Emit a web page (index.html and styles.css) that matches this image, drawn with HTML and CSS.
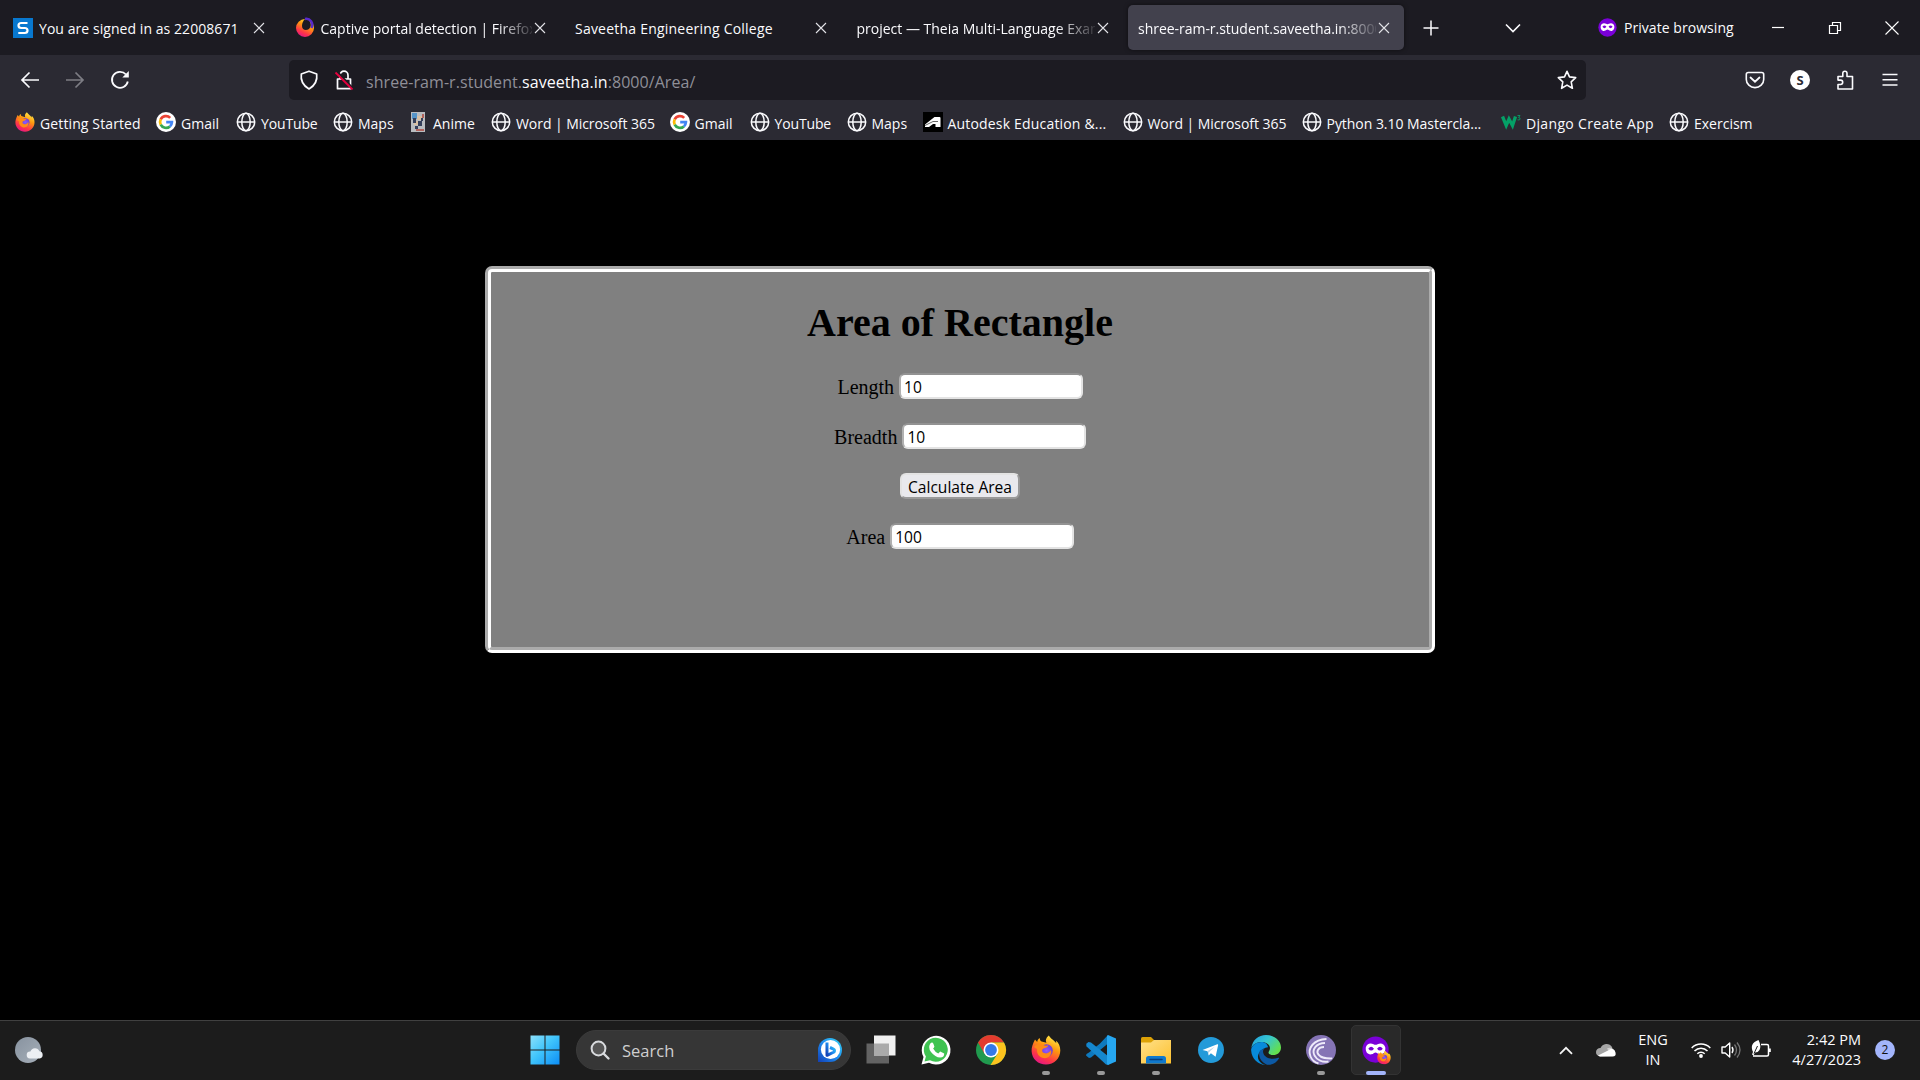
FILE: index.html
```html
<!DOCTYPE html>
<html lang="en">
<head>
<meta charset="utf-8">
<title>Area of Rectangle</title>
<link rel="stylesheet" href="styles.css">
</head>
<body>
<svg class="defs" width="0" height="0" aria-hidden="true">
  <defs>
    <linearGradient id="fire" x1="0.8" y1="0" x2="0.3" y2="1"><stop offset="0" stop-color="#fff44f"/><stop offset="0.4" stop-color="#ff980e"/><stop offset="0.75" stop-color="#ff3647"/><stop offset="1" stop-color="#e31587"/></linearGradient>
    <radialGradient id="violet"><stop offset="0" stop-color="#9059ff"/><stop offset="1" stop-color="#6e3fd4"/></radialGradient>
    <linearGradient id="win" x1="0" y1="0" x2="1" y2="1"><stop offset="0" stop-color="#8ce0fb"/><stop offset="0.45" stop-color="#41c5fb"/><stop offset="1" stop-color="#0c8df5"/></linearGradient>
    <linearGradient id="bing" x1="1" y1="0" x2="0" y2="1"><stop offset="0" stop-color="#35d4f5"/><stop offset="0.5" stop-color="#1f8df0"/><stop offset="1" stop-color="#123fb4"/></linearGradient>
    <linearGradient id="folder" x1="0" y1="0" x2="1" y2="1"><stop offset="0" stop-color="#ffe08a"/><stop offset="1" stop-color="#fdc12f"/></linearGradient>
    <linearGradient id="edgeTop" x1="0" y1="0" x2="1" y2="0.6"><stop offset="0" stop-color="#1e9de4"/><stop offset="0.5" stop-color="#36c6d0"/><stop offset="1" stop-color="#63df4e"/></linearGradient>
    <linearGradient id="moon" x1="0" y1="0" x2="1" y2="1"><stop offset="0" stop-color="#87929f"/><stop offset="1" stop-color="#a6afb9"/></linearGradient>
    <symbol id="globe" viewBox="0 0 20 20"><g fill="none" stroke="#fbfbfe" stroke-width="1.5"><circle cx="10" cy="10" r="8.7"/><ellipse cx="10" cy="10" rx="4.2" ry="8.7"/><path d="M1.3 10h17.4"/></g></symbol>
    <symbol id="google" viewBox="0 0 20 20"><circle cx="10" cy="10" r="10" fill="#fff"/><g fill="none" stroke-width="2.7"><path d="M4.7 7.4A5.9 5.9 0 0 1 14.2 5.9" stroke="#ea4335"/><path d="M4.7 7.4a5.9 5.9 0 0 0 0 5.2" stroke="#fbbc05"/><path d="M4.7 12.6a5.9 5.9 0 0 0 9.2 1.8" stroke="#34a853"/><path d="M13.9 14.4A5.9 5.9 0 0 0 15.9 10.2H10.2" stroke="#4285f4"/></g></symbol>
    <symbol id="firefox" viewBox="0 0 30 30"><path d="M17.8 0.4c-3 2.5-3.6 5-2.4 7.3l-4.8-1.2C9.2 5.800 8.800 4.600 8.700 3 7.300 3.900 6.300 5.200 6.200 7L4 4.400C1.900 8.700 0.400 12 0.600 16.300 1 24.200 7.200 29.600 15 29.600c8 0 14.300-6.200 14.300-14.100 0-4.400-1.600-7.600-4.300-9.700l.3 2.500C22.600 4.500 19.600 3.600 17.800.4Z" fill="url(#fire)"/><circle cx="15.500" cy="15.500" r="6.300" fill="url(#violet)"/><path d="M3 12c3-3.500 6-4 9-2.300 2 1.200 3.900 1 5.300.8-1 2-2.600 2.500-4.600 2.900-2 .6-2.200 3.700.6 4.700 3.200 1.200 5.500-1.100 6.500-3 2 4.500-2.600 9-7.500 8C7.500 22 5.500 18 6.100 14Z" fill="#ff8a16"/></symbol>
    <symbol id="close" viewBox="0 0 12 12"><path d="M1 1l10 10M11 1L1 11" fill="none" stroke="#e3e3e8" stroke-width="1.1"/></symbol>
    <symbol id="mask" viewBox="0 0 30 30"><circle cx="15" cy="15" r="14.500" fill="#7a00d8"/><path fill-rule="evenodd" d="M4.300 12.500c1-4 5-5.200 8.500-3.300q2.200 1.200 4.400 0c3.500-1.900 7.500-.7 8.500 3.300.8 5-2.200 8.500-6.200 7.800-2-.4-3.200-2-4.500-2s-2.500 1.600-4.500 2c-4 .7-7-2.800-6.200-7.800ZM7 14q3.200 4.300 6.300 0-3.100-4.300-6.300 0Zm9.700 0q3.100 4.300 6.300 0-3.200-4.300-6.300 0Z" fill="#fff"/></symbol>
  </defs>
</svg>

<header class="browser">
  <div class="tabstrip">
    <div class="tab first"><svg class="favicon" viewBox="0 0 20 20"><path fill="#0878cf" d="M0 0h20v20H0z"/><path d="M14.500 5H8.300Q5.500 5 5.500 7.500T8.300 10h3.400q2.800 0 2.800 2.500T11.700 15H5.300" fill="none" stroke="#fff" stroke-width="2.200"/></svg><span class="title t1">You are signed in as 22008671</span><svg class="x"><use href="#close"/></svg></div>
    <div class="tab"><svg class="favicon" viewBox="0 0 20 20"><path d="M10 1a9 9 0 1 0 9 9C19 6 16 2 13 1c3 3 4 7 1 10-3 2-7 1-7-3 0-3 1-5 3-7Z" fill="url(#fire)"/><path d="M10 1c5-1 9 4 6.500 9" fill="none" stroke="#592acb" stroke-width="2.500"/></svg><span class="title fade t2">Captive portal detection | Firefox</span><svg class="x"><use href="#close"/></svg></div>
    <div class="tab"><span class="title t3">Saveetha Engineering College</span><svg class="x"><use href="#close"/></svg></div>
    <div class="tab"><span class="title fade t4">project — Theia Multi-Language Example</span><svg class="x"><use href="#close"/></svg></div>
    <div class="tab active"><span class="title fade t5">shree-ram-r.student.saveetha.in:8000/Area</span><svg class="x"><use href="#close"/></svg></div>
    <svg class="newtab" viewBox="0 0 16 16"><path d="M8 .5v15M.5 8h15" stroke="#fbfbfe" stroke-width="1.500"/></svg>
    <svg class="alltabs" viewBox="0 0 16 10"><path d="M1 1.500l7 7 7-7" fill="none" stroke="#fbfbfe" stroke-width="1.600"/></svg>
    <div class="private"><svg width="19" height="19"><use href="#mask"/></svg><span>Private browsing</span></div>
    <div class="wincontrols">
      <svg viewBox="0 0 14 14"><path d="M1 6.500h12" stroke="#fff" stroke-width="1.200"/></svg>
      <svg viewBox="0 0 14 14"><path d="M1.500 4.500h8v8h-8zM4.500 4V1.500h8v8H10" fill="none" stroke="#fff" stroke-width="1.200"/></svg>
      <svg viewBox="0 0 14 14"><path d="M.5.500l13 13M13.500.5l-13 13" stroke="#fff" stroke-width="1.100"/></svg>
    </div>
  </div>

  <div class="navbar">
    <svg class="nav" viewBox="0 0 20 20"><path d="M19 10H2M9.500 2.500L2 10l7.500 7.500" fill="none" stroke="#fbfbfe" stroke-width="1.700"/></svg>
    <svg class="nav dim" viewBox="0 0 20 20"><path d="M1 10h17M10.500 2.500L18 10l-7.500 7.500" fill="none" stroke="#fbfbfe" stroke-width="1.700"/></svg>
    <svg class="nav" viewBox="0 0 20 20"><path d="M17.800 11.500A8 8 0 1 1 16 4.500" fill="none" stroke="#fbfbfe" stroke-width="1.800"/><path d="M18.800 1v6.500h-6.500Z" fill="#fbfbfe"/></svg>
    <div class="urlbar">
      <svg class="shield" viewBox="0 0 20 20"><path d="M10 1.200L17.700 4c.8 6-1.700 11.500-7.700 15C4 15.500 1.500 10 2.300 4Z" fill="none" stroke="#fbfbfe" stroke-width="1.700" stroke-linejoin="round"/></svg>
      <svg class="lock" viewBox="0 0 20 20"><path d="M6 9V5.200a4 4 0 0 1 8 0V9M3.500 9h13v9.700h-13Z" fill="none" stroke="#fbfbfe" stroke-width="1.700" stroke-linejoin="round"/><path d="M3.500 2l15 16" stroke="#1c1b22" stroke-width="2"/><path d="M1.500 2.500l17 17" stroke="#e7003f" stroke-width="1.800"/></svg>
      <span class="url">shree-ram-r.student.<b>saveetha.in</b>:8000/Area/</span>
      <svg class="star" viewBox="0 0 20 20"><path d="M10 1.300l2.500 5.600 6.200.700-4.500 4.200 1.200 6.500-5.400-3.200-5.400 3.200 1.200-6.500L1.300 7.600l6.200-.7Z" fill="none" stroke="#fbfbfe" stroke-width="1.600" stroke-linejoin="round"/></svg>
    </div>
    <div class="tools">
      <svg viewBox="0 0 20 20"><path d="M3.200 2.500h13.600q1.900 0 1.900 1.900v5a8.700 8.200 0 0 1-17.400 0v-5q0-1.900 1.900-1.900Z" fill="none" stroke="#fbfbfe" stroke-width="1.600"/><path d="M5.500 7.500L10 11.700l4.500-4.200" fill="none" stroke="#fbfbfe" stroke-width="1.800" stroke-linecap="round"/></svg>
      <span class="avatar">S</span>
      <svg viewBox="0 0 20 20"><path d="M3 19V14.500H5.500a2.200 2.200 0 0 0 0-4.400H3V6.500h4.800V3.300a2.100 2.100 0 0 1 4.200 0V6.500h5.500V19Z" fill="none" stroke="#fbfbfe" stroke-width="1.600" stroke-linejoin="round"/></svg>
      <svg viewBox="0 0 20 20"><path d="M2.500 4.500h15M2.500 9.700h15M2.500 15h15" stroke="#fbfbfe" stroke-width="1.500"/></svg>
    </div>
  </div>

  <nav class="bookmarks">
    <span class="bm w1"><svg><use href="#firefox"/></svg><span>Getting Started</span></span>
    <span class="bm w2"><svg><use href="#google"/></svg><span>Gmail</span></span>
    <span class="bm w3"><svg><use href="#globe"/></svg><span>YouTube</span></span>
    <span class="bm w4"><svg><use href="#globe"/></svg><span>Maps</span></span>
    <span class="bm w5"><svg viewBox="0 0 20 20"><path fill="#b9bcc0" d="M3 0h14v20H3z"/><path fill="#5594c9" d="M4 1h5v6H4z"/><path fill="#d8c0a5" d="M9 4h5v4H9zM6 9h4v4H6z"/><path fill="#35405b" d="M5 6h3v5H5zM10 9h4v5h-4zM7 14h3v3H7zM13 6h2v3h-2z"/><path fill="#b0635d" d="M8 17h8v2H8zM14 2h2v4h-2z"/></svg><span>Anime</span></span>
    <span class="bm w6"><svg><use href="#globe"/></svg><span>Word | Microsoft 365</span></span>
    <span class="bm w2"><svg><use href="#google"/></svg><span>Gmail</span></span>
    <span class="bm w3"><svg><use href="#globe"/></svg><span>YouTube</span></span>
    <span class="bm w7"><svg><use href="#globe"/></svg><span>Maps</span></span>
    <span class="bm w8"><svg viewBox="0 0 20 20"><path fill="#000" d="M0 0h20v20H0z"/><path fill="#fff" d="M2 15V12.500L11.500 5h5q1 0 1 1v9H12.500v-3H10L6 15Z"/><path d="M2 13.500L10 9.500h5" stroke="#000" stroke-width=".6" fill="none"/></svg><span>Autodesk Education &amp;...</span></span>
    <span class="bm w9"><svg><use href="#globe"/></svg><span>Word | Microsoft 365</span></span>
    <span class="bm w10"><svg><use href="#globe"/></svg><span>Python 3.10 Mastercla...</span></span>
    <span class="bm w11"><svg viewBox="0 0 20 20"><path d="M1.500 4.500l3.700 9L8 7l3.500 6.500L14.500 4.500" fill="none" stroke="#04a067" stroke-width="3.300"/><path d="M16.500 3.500H19l-1.400 2q1.700 0 1.500 1.500t-2.600.8" fill="none" stroke="#04a067" stroke-width=".9"/></svg><span>Django Create App</span></span>
    <span class="bm"><svg><use href="#globe"/></svg><span>Exercism</span></span>
  </nav>
</header>

<main class="page">
  <form class="card">
    <h1>Area of Rectangle</h1>
    <div class="row"><label for="l">Length</label><input id="l" type="text" value="10"></div>
    <div class="row"><label for="b">Breadth</label><input id="b" type="text" value="10"></div>
    <div class="row"><button type="button">Calculate Area</button></div>
    <div class="row"><label for="a">Area</label><input id="a" type="text" value="100"></div>
  </form>
</main>

<footer class="taskbar">
  <svg class="weather" viewBox="0 0 30 28"><circle cx="13" cy="14" r="13" fill="url(#moon)"/><path d="M15 22.500a3.500 3.500 0 0 1 .4-7 4.800 4.800 0 0 1 9-.3 3.700 3.700 0 0 1 .3 7.300Z" fill="#eceff3"/></svg>
  <div class="apps">
    <div class="app"><svg viewBox="0 0 30 30"><path d="M.5.500h14v14H.5zM15.500.5h14v14h-14zM.5 15.500h14v14H.5zM15.500 15.500h14v14h-14z" fill="url(#win)"/></svg></div>
    <div class="search">
      <svg class="glass" viewBox="0 0 20 20"><circle cx="8.500" cy="8.500" r="6.900" fill="#555" stroke="#d8dadd" stroke-width="2"/><path d="M13.500 13.500l5 5" stroke="#d8dadd" stroke-width="2.400" stroke-linecap="round"/></svg>
      <span>Search</span>
      <svg class="bing" viewBox="0 0 26 26"><path d="M1 25V13A12 12 0 1 1 13 25Z" fill="url(#bing)"/><circle cx="13.500" cy="12.500" r="9.600" fill="#fff"/><path d="M10 5.500v12.800l7-3.300q1.500-2-1-3.200l-3-1.300" fill="none" stroke="url(#bing)" stroke-width="3" stroke-linejoin="round"/></svg>
    </div>
    <div class="app"><svg viewBox="0 0 30 30"><path fill="#636363" d="M.5 8.500H23v20H.5z"/><path fill="#f0f0f0" d="M8 .500h21.500v20H8z"/><path fill="#aaa" d="M8 8.500h15v12H8z"/></svg></div>
    <div class="app"><svg viewBox="0 0 30 30"><path d="M.5 29.600l2-7.500A14.400 14.400 0 1 1 8 27.700Z" fill="#fff"/><path d="M3.500 26.600l1.400-5A12 12 0 1 1 9 25.300Z" fill="#3fc351"/><path d="M9.500 8.200q2-1.500 2.900.6l1 2.600q-.3 1.300-1.300 2.200 2.300 4 5.200 4.900l1.900-1.900 4 2q.2 4-4 4-5-.2-9.200-5.600-3.500-4.900-.5-8.800Z" fill="#fff"/></svg></div>
    <div class="app"><svg viewBox="0 0 30 30"><circle cx="15" cy="15" r="15" fill="#209a4e"/><path d="M2 7.500A15 15 0 0 1 28 7.500H15L8.500 18.700Z" fill="#e33b2e"/><path d="M28 7.500A15 15 0 0 1 14.500 30L21.500 18.700 15 7.500Z" fill="#fcc31e"/><circle cx="15" cy="15" r="7.500" fill="#fff"/><circle cx="15" cy="15" r="5.900" fill="#3479e8"/></svg></div>
    <div class="app running"><svg><use href="#firefox"/></svg></div>
    <div class="app running"><svg viewBox="0 0 30 30"><path d="M22 0l-8 8.500L3 17.500.5 19 0 20.500 3 23l2-.5L22 8.500Z" fill="#0e79be"/><path d="M2.500 7L.3 8.700v2.500L20 29.500l2.500.5v-8.500L5 7.500Z" fill="#1587ce"/><path d="M22 0l8 3.500v23L22 30l-1-1V1Z" fill="#26a7f1"/></svg></div>
    <div class="app running"><svg viewBox="0 0 30 30"><path d="M0 3.500Q0 2 1.500 2H10l3 3v6H0Z" fill="#dca106"/><path d="M0 7.500h10l3-2.500h17v23.500H0Z" fill="url(#folder)"/><path d="M5 28.500v-5q0-2.500 2.500-2.500h15q2.500 0 2.500 2.500v5Z" fill="#1079cd"/><path d="M9 24.500h12" stroke="#073f7e" stroke-width="1.500" stroke-linecap="round"/></svg></div>
    <div class="app"><svg viewBox="0 0 30 30"><circle cx="15" cy="15" r="13" fill="#239ad9"/><path d="M6.500 15L21.300 9.300q1-.3.800 1l-2.500 11.400-4.700-3.500-2.200 2.300-1.100-4.300Z" fill="#fff"/><path d="M11.500 16l7.200-4.300-6 5.900v2.500Z" fill="#b7d4e7"/></svg></div>
    <div class="app"><svg viewBox="0 0 30 30"><path d="M.3 13C1.500 5 7.500 0 15 0c9 0 15 6 15 12.500 0 5-4 7.500-7.500 7.500-4 0-5-1.500-5-2.500s1.500-2 1.500-4.500C18.800 9.500 15 7 10.500 7 5.500 7 2 9.500.3 13Z" fill="url(#edgeTop)"/><path d="M10.500 7C4 7-.5 12 .2 16 .7 23.500 7 30 15 30c-6.500-1-10-7-7-12 1.500-2.500 4-4 5-4.500.7-.4 2-1.300 4-1.300C16.500 8.700 13.500 7 10.500 7Z" fill="#078bdb"/><path d="M9 15.500c-2.500 4.500.5 12 7 14.200 5 .6 9.500-2 12-6.200.4-.7-.2-1-.8-.8-7.200 2.500-13.800 0-15-5-.5-2 .3-3.600 1.500-4.500Z" fill="#0c59a4"/></svg></div>
    <div class="app running"><svg viewBox="0 0 30 30"><circle cx="15" cy="15" r="15" fill="#8574b5"/><g fill="none" stroke="#eeeafa" stroke-width="1.900"><path d="M20.500 4C8 4.500 1 13 4.500 21.500c1.500 3.500 4.500 6 8 7"/><path d="M19 8C10 8 5.500 15 8.500 20.500c2.500 4.500 8 7 14 6"/><path d="M18 12c-6 0-8 4.500-5.500 7.700 3 4 8.500 3.800 13.800 3.700"/></g></svg></div>
    <div class="app current"><svg viewBox="0 0 32 32"><use href="#mask" width="29" height="29" x="1" y="1"/><use href="#firefox" x="17" y="16.500" width="15" height="15"/></svg></div>
  </div>
  <div class="tray">
    <svg class="up" viewBox="0 0 14 9"><path d="M1 7.800l6-6 6 6" fill="none" stroke="#f4f4f4" stroke-width="1.800"/></svg>
    <svg class="cloud" viewBox="0 0 20 14"><path d="M4 13.500A4.200 4.200 0 0 1 4.500 5 6.500 6.500 0 0 1 16 4l2 9Z" fill="#a5a5a5"/><path d="M11 5.500A5 5 0 0 1 18.500 8L14 10Z" fill="#d2d2d2"/><path d="M2 12.500L13 7a4 4 0 0 1 6.500 2.500q1 4-3 4H4Z" fill="#fff"/></svg>
    <div class="lang"><span>ENG</span><span>IN</span></div>
    <svg class="stat" viewBox="0 0 20 20"><g fill="none" stroke="#fff" stroke-width="1.500"><path d="M.7 8a13 13 0 0 1 18.600 0M3.500 11a9 9 0 0 1 13 0M6.300 13.700a5.300 5.300 0 0 1 7.400 0"/></g><circle cx="10" cy="16" r="1.900" fill="#fff"/></svg>
    <svg class="stat" viewBox="0 0 20 20"><path d="M1 7h3.200L8.700 3v14l-4.500-4H1Z" fill="none" stroke="#fff" stroke-width="1.400" stroke-linejoin="round"/><path d="M11 7q2 3 0 6" fill="none" stroke="#fff" stroke-width="1.400"/><path d="M13.500 4.500q4 5.500 0 11M16 2.500q6 7.500 0 15" fill="none" stroke="#747474" stroke-width="1.300"/></svg>
    <svg class="stat" viewBox="0 0 20 20"><path d="M10 4.500h6q1.500 0 1.500 1.500v8.500q0 1.500-1.500 1.500H2" fill="none" stroke="#fff" stroke-width="1.500"/><path d="M18 8.500h1.800v3.500H18Z" fill="#fff"/><path d="M7.500 0q3 6 1 10-1.500 2.500-4.500 2.500l-1.500 3L1 14.500l1-2.500Q-2 3.500 7.500 0Z" fill="#fff"/><path d="M3 13.500L6.500 6" stroke="#1c1c1c"/></svg>
    <div class="clock"><span>2:42 PM</span><span>4/27/2023</span></div>
    <span class="badge">2</span>
  </div>
</footer>
</body>
</html>
```

FILE: styles.css
```css
* { box-sizing: border-box; }
body {
  margin: 0;
  width: 1920px;
  height: 1080px;
  overflow: hidden;
  display: flex;
  flex-direction: column;
  background: #000;
  color: #fbfbfe;
  font-family: "Open Sans", "Noto Sans", sans-serif;
  font-size: 14px;
}
svg { display: block; flex: none; overflow: visible; }
.defs { position: absolute; }

/* Browser chrome */
.browser { height: 140px; background: #2b2a33; flex: none; }
.tabstrip { height: 55px; background: #1c1b22; display: flex; align-items: center; padding-left: 2px; }
.tab {
  width: 276px; height: 45px; margin-right: 5.5px; padding: 0 14px 0 10px;
  display: flex; align-items: center; gap: 6px; border-radius: 5px; flex: none;
}
.tab.first { padding-right: 13px; }
.tab.active { background: #42414d; box-shadow: 0 0 4px rgba(0, 0, 0, 0.5); }
.favicon { width: 20px; height: 20px; margin-left: 1px; }
.title { flex: 1; overflow: hidden; white-space: nowrap; line-height: 22px; padding-top: 2px; }
.fade { margin-right: -4px; -webkit-mask-image: linear-gradient(90deg, #000 84%, transparent 102%); mask-image: linear-gradient(90deg, #000 84%, transparent 102%); }
.t1 { letter-spacing: 0.06px; }
.t3 { letter-spacing: 0.22px; }
.t5 { letter-spacing: -0.03px; }
.x { width: 12px; height: 12px; }
.newtab { width: 16px; height: 16px; margin-left: 13px; }
.alltabs { width: 16px; height: 10px; margin: 0 77px 0 auto; }
.private { display: flex; align-items: center; gap: 7px; width: 151px; white-space: nowrap; letter-spacing: 0.05px; }
.wincontrols { display: flex; }
.wincontrols svg { width: 14px; height: 14px; margin: 0 21.5px; }

.navbar { height: 50px; padding: 5px 20px 5px 20px; display: flex; align-items: center; }
.nav { width: 20px; height: 20px; margin-right: 25px; }
.dim { opacity: 0.4; }
.urlbar {
  width: 1297px; height: 40px; margin-left: 134px; padding: 0 9px 0 10px;
  background: #1c1b22; border-radius: 5px; display: flex; align-items: center;
}
.shield, .star { width: 20px; height: 20px; }
.lock { width: 20px; height: 20px; margin: 0 12px 0 15px; }
.url { flex: 1; font-size: 16px; color: #8f8f98; line-height: 24px; padding-top: 4px; letter-spacing: 0.06px; }
.url b { font-weight: 400; color: #fbfbfe; }
.tools { display: flex; gap: 25px; margin-left: auto; }
.tools svg { width: 20px; height: 20px; }
.avatar {
  width: 20px; height: 20px; border-radius: 50%; background: #fff; color: #2b2a33;
  font-size: 13px; font-weight: 700; line-height: 20px; text-align: center;
}

.bookmarks { height: 35px; display: flex; align-items: center; padding: 0 0 1px 15px; }
.bm { display: flex; align-items: center; gap: 5px; white-space: nowrap; flex: none; }
.bm svg { width: 20px; height: 20px; }
.bm span { padding-top: 2px; }
.w1 { width: 141px; letter-spacing: 0.12px; }
.w2 { width: 80px; }
.w3 { width: 97px; letter-spacing: -0.15px; }
.w4 { width: 75px; }
.w5 { width: 83px; }
.w6 { width: 178.5px; letter-spacing: -0.06px; }
.w7 { width: 76px; }
.w8 { width: 200px; letter-spacing: 0.18px; }
.w9 { width: 179px; letter-spacing: -0.06px; }
.w10 { width: 199.5px; letter-spacing: -0.04px; }
.w11 { width: 168px; letter-spacing: 0.33px; }

/* Page content */
.page { height: 880px; padding-top: 126px; background: #000; flex: none; }
.card {
  width: 950px; height: 387px; margin: 0 auto; padding-top: 28px;
  background: #808080; border: 6px groove #fff; border-radius: 7px; color: #000;
  font-family: "Liberation Serif", serif; font-size: 20px;
}
.card h1 { margin: 0 0 27px; text-align: center; font-size: 40px; line-height: 46px; }
.row { display: flex; justify-content: center; align-items: center; gap: 5px; height: 26px; margin-bottom: 24px; }
.row label { line-height: 26px; padding-top: 1px; }
.row input, .row button {
  height: 26px; margin: 0; border: 2px solid; border-radius: 6px; color: #000;
  font-family: "Open Sans", "Noto Sans", sans-serif; font-size: 15.6px; line-height: 20px;
}
.row input { width: 183.5px; padding: 2px 3px 0; background: #fff; border-color: #929292 #e3e3e3 #e3e3e3 #b0b0b0; }
.row button { width: 120px; padding: 1px 0 0; background: #e9e9ed; border-color: #e3e3e3 #999 #999 #e3e3e3; white-space: nowrap; }

/* Taskbar */
.taskbar {
  height: 60px; background: #1c1c1c; border-top: 1px solid #404040; flex: none;
  display: flex; align-items: center; padding: 0 25px 1px 15px;
}
.weather { width: 30px; height: 28px; margin-right: 472px; }
.apps { display: flex; align-items: center; height: 58px; }
.app { position: relative; width: 55px; height: 50px; display: flex; align-items: center; justify-content: center; flex: none; }
.app svg { width: 30px; height: 30px; }
.running::after, .current::after {
  content: ""; position: absolute; left: 50%; bottom: 0; width: 8px; height: 4px;
  margin-left: -4px; border-radius: 2px; background: #999;
}
.app.current { width: 50px; margin-left: 3px; background: #292929; border: 1px solid #333; border-radius: 5px; }
.current::after { width: 20px; margin-left: -10px; bottom: -1px; background: #a3b5fb; }
.search {
  width: 275px; height: 40px; margin: 0 2px 0 4px; padding: 0 7px 0 13px; border-radius: 20px;
  background: #363636; border: 1px solid #3b3b3b; display: flex; align-items: center; color: #cfcfcf; font-size: 16.5px;
}
.search span { flex: 1; margin-left: 12px; }
.glass { width: 20px; height: 20px; }
.bing { width: 26px; height: 26px; }
.tray { display: flex; align-items: center; margin-left: auto; }
.up { width: 14px; height: 9px; margin-right: 23px; }
.cloud { width: 20px; height: 14px; margin-right: 22px; }
.lang, .clock { display: flex; flex-direction: column; line-height: 20px; font-size: 14.5px; }
.lang { width: 30px; align-items: center; margin-right: 23px; }
.stat { width: 20px; height: 20px; margin-right: 10px; }
.clock { width: 80px; align-items: flex-end; margin-right: 14px; }
.badge { width: 20px; height: 20px; border-radius: 50%; background: #a3b5fb; color: #111; font-size: 12px; line-height: 20px; text-align: center; }
```
